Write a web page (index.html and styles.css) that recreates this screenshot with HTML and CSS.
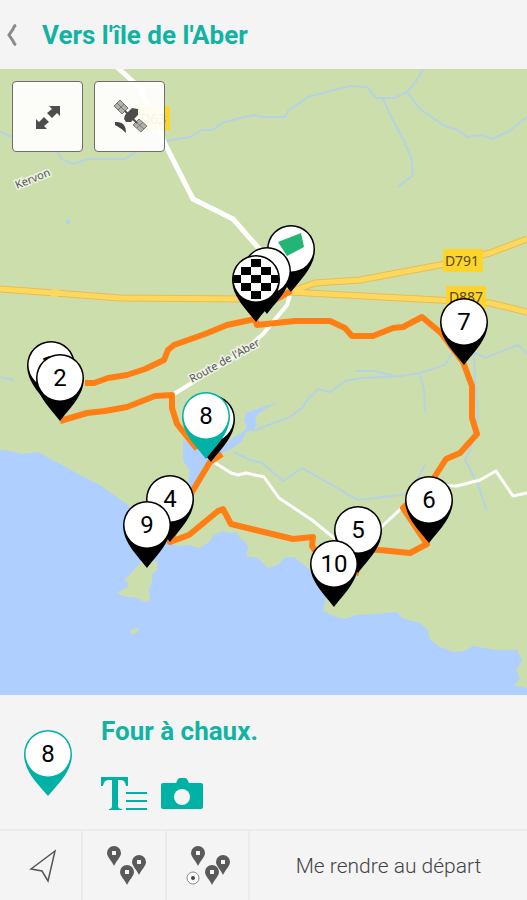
FILE: index.html
```html
<!DOCTYPE html>
<html lang="fr">
<head>
    <meta charset="UTF-8">
    <meta name="viewport" content="width=device-width, initial-scale=1.0">
    <title>Vers l'île de l'Aber</title>
    <link rel="stylesheet" href="styles.css">
</head>
<body>
    <header class="topbar">
        <a href="#" class="back" aria-label="Retour">
            <svg width="12" height="22" viewBox="0 0 12 22"><path d="M10 1 Q8 2 7 5 L3 11 L7 17 Q8 20 10 21" fill="none" stroke="#8a8a8a" stroke-width="3"/></svg>
        </a>
        <h1>Vers l'île de l'Aber</h1>
    </header>

    <main class="map">
        <svg class="map-canvas" viewBox="0 69 527 626" preserveAspectRatio="xMidYMid slice">
            <defs>
                <g id="pin">
                    <path d="M0 43 C-9 31 -24 18 -24 0 A24 24 0 0 1 24 0 C24 18 9 31 0 43Z"/>
                    <circle r="22.5" fill="#fff"/>
                </g>
                <clipPath id="disc"><circle r="23"/></clipPath>
            </defs>

            <rect y="69" width="527" height="626" fill="#cddead"/>

            <!-- mer -->
            <g fill="#aecfff">
                <path d="M0 450 L10 451 L22 454 L38 452 L60 464 L80 475 L100 485 L128 505 L150 535 L165 542 L178 546 L188 545 L192 546 L200 548 L209 542 L213 536 L222 531 L230 533 L236 532 L240 538 L246 542 L248 548 L246 556 L258 558 L268 568 L278 565 L284 558 L294 557 L303 564 L315 575 L327 595 L323 611 L334 616 L345 619 L356 615 L375 614 L397 612 L402 618 L412 621 L418 622 L428 630 L430 640 L440 647 L454 652 L464 651 L473 646 L495 650 L517 650 L522 661 L516 670 L520 679 L514 686 L527 688 L527 695 L0 695Z"/>
                <path d="M183 440 L206 452 L225 445 L234 437 L242 433 L247 427 L244 419 L247 412 L255 410 L266 406 L277 403 L265 409 L259 413 L255 418 L257 425 L253 430 L246 432 L242 441 L233 448 L224 452 L214 460 L196 491 L186 495 L189 480 L189 470 L183 460Z"/>
                <circle cx="68" cy="222" r="2"/>
            </g>
            <g fill="#cddead">
                <path d="M140 563 L158 561 L157 570 L152 574 L152 581 L149 590 L150 600 L146 602 L140 600 L134 597 L126 597 L117 593 L127 587 L129 583 L124 580 L131 573Z"/>
                <path d="M129 632 Q133 628 139 628 L138 632 L133 634Z"/>
            </g>

            <!-- ruisseaux -->
            <g class="stream">
                <path d="M0 132 L10 136 L30 140 L57 151 L62 159 L73 164 L88 159 L125 159 L136 152 L165 141 L190 137 L202 130 L213 130 L222 123 L240 118 L255 115 L263 117 L285 117 L288 111 L308 97 L330 91 L350 86 L367 87 L376 98 L395 98 L407 92 L415 83 L423 69"/>
                <path d="M383 99 L392 118 L405 143 L411 157 L413 175 L398 187"/>
                <path d="M407 92 L420 109 L445 126 L458 130 L467 137 L482 135 L492 139 L508 132 L527 117"/>
                <path d="M253 431 L290 417 L302 408 L308 399 L318 389 L330 392 L345 381 L363 378 L385 377 L400 376 L420 373 L445 365 L452 354 L474 352 L485 358 L510 348 L518 345 L527 353"/>
                <path d="M355 371 L375 371 L394 376 M420 375 L424 388 L425 412"/>
                <path d="M234 452 L250 460 L262 463 L283 481 L302 468 L325 481 L358 500 L400 495 L410 492 L425 465"/>
                <path d="M474 352 L475 385 L478 415 L470 450 L465 460 L478 485 L487 511"/>
                <path d="M0 377 L14 380"/>
            </g>

            <!-- routes blanches -->
            <g class="road">
                <path d="M117 67 L140 88 L165 144 L193 199 L233 219 L262 252" stroke-width="5"/>
                <path d="M290 295 L287 305 L263 334 L245 350 L174 394" stroke-width="4"/>
                <path d="M212 461 L231 473 L238 475 L246 473 L264 477 L279 498 L312 520 L334 538 L345 548 L378 530 L405 505 L430 485 L457 486 L480 480 L496 471 L513 496 L527 493" stroke-width="3"/>
            </g>

            <!-- départementales -->
            <g class="main-road-edge">
                <path d="M0 289 L55 293 L120 298 L245 299 L290 292 L315 283 L360 280 L440 265 L490 253 L527 239"/>
                <path d="M290 292 L345 295 L420 299 L490 303 L527 312"/>
            </g>
            <g class="main-road">
                <path d="M0 289 L55 293 L120 298 L245 299 L290 292 L315 283 L360 280 L440 265 L490 253 L527 239"/>
                <path d="M290 292 L345 295 L420 299 L490 303 L527 312"/>
            </g>
            <ellipse cx="55" cy="293" rx="6" ry="4" fill="#fed85c"/>

            <g class="road-label">
                <rect x="131" y="106" width="39" height="24"/>
                <text x="153" y="124">D63</text>
                <rect x="443" y="249" width="40" height="23"/>
                <text x="462" y="266">D791</text>
                <rect x="446" y="286" width="40" height="23"/>
                <text x="466" y="302">D887</text>
            </g>
            <g class="place-label">
                <text transform="translate(17 189) rotate(-22)">Kervon</text>
                <text transform="translate(192 383) rotate(-29)">Route de l'Aber</text>
            </g>

            <!-- tracé de la randonnée -->
            <g class="track">
                <path d="M60 421 L87 413 L105 411 L127 407 L155 396 L172 395 L172 408 L177 424 L197 449"/>
                <path d="M85 383 L94 383 L108 378 L127 375 L145 369 L164 360 L168 350 L174 345 L205 334 L227 325 L255 319 L257 325 L295 321 L330 321 L345 328 L352 336 L373 336 L393 328 L403 327 L422 317 L441 333 L463 362 L472 386 L472 418 L477 434 L460 453 L446 459 L430 484 L403 508 L427 544 L410 553 L380 550 L345 548"/>
                <path d="M222 454 L210 462 L192 492 L170 542 L189 535 L218 511 L223 509 L231 524 L293 539 L313 537 L312 546 L325 565 L359 573"/>
                <path d="M275 300 L291 291"/>
            </g>

            <g class="pins">
                <a href="#depart" aria-label="Départ">
                    <use href="#pin" x="291" y="249"/>
                    <path d="M278 242 L301 233 L304 247 L287 256Z" fill="#23b573"/>
                </a>
                <a href="#etape-11" aria-label="Étape 11"><use href="#pin" x="267" y="271"/></a>
                <a href="#arrivee" aria-label="Arrivée">
                    <use href="#pin" x="256" y="279"/>
                    <g transform="translate(256 279)" clip-path="url(#disc)">
                        <path d="M-5 -20h10v8h-10z M-15 -12h10v8h-10z M5 -12h10v8h-10z M-25 -4h10v8h-10z M-5 -4h10v8h-10z M15 -4h10v8h-10z M-15 4h10v8h-10z M5 4h10v8h-10z M-5 12h10v8h-10z"/>
                    </g>
                </a>
                <a href="#etape-1"><use href="#pin" x="51" y="365"/><text x="48" y="373">1</text></a>
                <a href="#etape-2"><use href="#pin" x="60" y="378"/><text x="60" y="386">2</text></a>
                <a href="#etape-3" aria-label="Étape 3"><use href="#pin" x="211" y="419"/></a>
                <a href="#etape-8"><use href="#pin" class="pin-active" x="206" y="416"/><text x="206" y="424">8</text></a>
                <a href="#etape-4"><use href="#pin" x="170" y="499"/><text x="170" y="507">4</text></a>
                <a href="#etape-9"><use href="#pin" x="147" y="525"/><text x="147" y="533">9</text></a>
                <a href="#etape-7"><use href="#pin" x="464" y="322"/><text x="464" y="330">7</text></a>
                <a href="#etape-6"><use href="#pin" x="429" y="500"/><text x="429" y="508">6</text></a>
                <a href="#etape-5"><use href="#pin" x="358" y="530"/><text x="358" y="538">5</text></a>
                <a href="#etape-10"><use href="#pin" x="334" y="564"/><text x="334" y="572">10</text></a>
            </g>
        </svg>

        <div class="map-controls">
            <button type="button" aria-label="Agrandir la carte">
                <svg width="28" height="28" viewBox="0 0 28 28" fill="#4d4d4d">
                    <path d="M15 3 H26 V13 L23 10 L18 15 L13 10 L18 6Z"/>
                    <path d="M13 26 H2 V16 L5 19 L10 14 L15 19 L10 23Z"/>
                </svg>
            </button>
            <button type="button" aria-label="Vue satellite">
                <svg width="36" height="36" viewBox="0 0 36 36">
                    <g fill="#b0b0ac" stroke="#777">
                        <path d="M2 7 L8 1 L16 9 L10 15Z M21 26 L27 20 L35 27 L29 33Z"/>
                        <path d="M5 4 L13 12 M6 11 L12 5 M24 23 L32 30 M25 29 L31 23"/>
                    </g>
                    <path d="M12 20 L13 16 L20 9 L26 10 L26 16 L19 23 L14 23Z" fill="#4d4d4d"/>
                    <path d="M13 12 L25 24" stroke="#4d4d4d" stroke-width="2"/>
                    <path d="M3 23 Q14 22 14 34 Q9 29 3 26Z" fill="#444"/>
                </svg>
            </button>
        </div>
    </main>

    <section class="step">
        <svg class="step-pin" width="50" height="68" viewBox="-25 -25 50 68">
            <path d="M0 42 C-9 31 -24 18 -24 0 A24 24 0 0 1 24 0 C24 18 9 31 0 42Z" fill="#00b2a5"/>
            <circle r="22.5" fill="#fff"/>
            <text x="0" y="8">8</text>
        </svg>
        <div class="step-body">
            <h2>Four à chaux.</h2>
            <div class="step-media">
                <a href="#texte" aria-label="Texte">
                    <svg width="46" height="34" viewBox="0 0 46 34" fill="#00b2a5">
                        <path d="M0 0 H27 V9 H25 Q24 3 20 3 H17 V29 Q17 32 21 32 V33 H8 V32 Q11 32 11 29 V3 H7 Q3 3 2 9 H0Z"/>
                        <path d="M25 15 H46 V17 H25Z M25 23 H46 V25 H25Z M25 31 H46 V33 H25Z"/>
                    </svg>
                </a>
                <a href="#photos" aria-label="Photos">
                    <svg width="42" height="32" viewBox="0 0 42 32">
                        <path d="M2 5 H15 L17 1 Q18 0 19 0 H24 Q25 0 26 1 L28 5 H40 Q42 5 42 7 V29 Q42 31 40 31 H2 Q0 31 0 29 V7 Q0 5 2 5Z" fill="#00b2a5"/>
                        <circle cx="21" cy="19" r="8" fill="#f4f4f4"/>
                    </svg>
                </a>
            </div>
        </div>
    </section>

    <nav class="toolbar">
        <button type="button" aria-label="Ma position">
            <svg width="28" height="34" viewBox="0 0 28 34"><path d="M26 2 L2 20 L13 22 L19 32Z" fill="none" stroke="#555" stroke-width="1.5"/></svg>
        </button>
        <button type="button" aria-label="Toutes les étapes">
            <svg width="40" height="40" viewBox="0 0 40 40">
                <defs>
                    <path id="mini" fill-rule="evenodd" d="M0 12 C-2 7 -7 3 -7 -1 A7 7 0 0 1 7 -1 C7 3 2 7 0 12Z M-2 -3 V1 H2 V-3Z"/>
                </defs>
                <g fill="#5a5a5a"><use href="#mini" x="8" y="8"/><use href="#mini" x="33" y="17"/><use href="#mini" x="21" y="27"/></g>
            </svg>
        </button>
        <button type="button" aria-label="Étapes et ma position">
            <svg width="48" height="40" viewBox="0 0 48 40">
                <g fill="#5a5a5a"><use href="#mini" x="12" y="8"/><use href="#mini" x="37" y="17"/><use href="#mini" x="26" y="27"/></g>
                <circle cx="7" cy="32" r="6" fill="#fff" stroke="#888"/>
                <circle cx="7" cy="32" r="2" fill="#444"/>
            </svg>
        </button>
        <button type="button" class="go">Me rendre au départ</button>
    </nav>
</body>
</html>
```
FILE: styles.css
```css
* {
    box-sizing: border-box;
}

body {
    margin: 0;
    min-height: 100vh;
    display: flex;
    flex-direction: column;
    font-family: Roboto, "Liberation Sans", sans-serif;
    background-color: #f4f4f4;
}

svg {
    display: block;
}

button {
    font-family: inherit;
    cursor: pointer;
}

.topbar {
    display: flex;
    align-items: center;
    gap: 24px;
    padding: 19px 6px 18px;
}

h1,
h2 {
    margin: 0;
    color: #12b3a2;
    font-size: 26px;
    font-weight: 700;
    line-height: 32px;
}

/* carte */
.map {
    position: relative;
    flex: 1;
    overflow: hidden;
}

.map-canvas {
    position: absolute;
    inset: 0;
    width: 100%;
    height: 100%;
}

.map-controls {
    position: absolute;
    top: 12px;
    left: 12px;
    display: flex;
    gap: 11px;
}

.map-controls button {
    width: 71px;
    height: 71px;
    padding: 0;
    display: grid;
    place-items: center;
    background-color: rgba(255, 255, 255, 0.93);
    border: 1px solid #6e6e6e;
    border-radius: 4px;
}

.stream path {
    fill: none;
    stroke: #b5d3e2;
    stroke-width: 2;
}

.road path {
    fill: none;
    stroke: #fff;
    stroke-linejoin: round;
}

.main-road path,
.main-road-edge path {
    fill: none;
    stroke: #fed85c;
    stroke-width: 5;
    stroke-linejoin: round;
}

.main-road-edge path {
    stroke: #e6bd56;
    stroke-width: 7;
}

.track path {
    fill: none;
    stroke: #ff7f15;
    stroke-width: 6;
    stroke-linejoin: round;
}

.road-label rect {
    fill: #fdd32d;
}

.road-label text {
    font-family: "Noto Sans", sans-serif;
    font-size: 14px;
    fill: #5c4a10;
    text-anchor: middle;
}

.place-label text {
    font-family: "Noto Sans", sans-serif;
    font-size: 11px;
    fill: #555;
    stroke: #eef2e4;
    stroke-width: 3px;
    paint-order: stroke;
}

.pins text,
.step-pin text {
    font-family: Roboto, sans-serif;
    font-size: 24px;
    fill: #000;
    text-anchor: middle;
}

.pin-active {
    fill: #00b2a5;
}

/* étape sélectionnée */
.step {
    display: flex;
    align-items: center;
    gap: 28px;
    padding: 20px 23px 18px;
}

.step-body {
    display: flex;
    flex-direction: column;
    gap: 30px;
}

.step-media {
    display: flex;
    align-items: center;
    gap: 14px;
}

/* barre du bas */
.toolbar {
    display: grid;
    grid-template-columns: 83px 84px 83px 1fr;
    height: 71px;
    border-top: 2px solid #ebebeb;
}

.toolbar button {
    display: grid;
    place-items: center;
    padding: 0 0 0 4px;
    background: none;
    border: none;
    border-right: 2px solid #ebebeb;
}

.toolbar .go {
    padding: 0;
    border-right: none;
    font-size: 21px;
    font-weight: 300;
    color: #444;
}
```
